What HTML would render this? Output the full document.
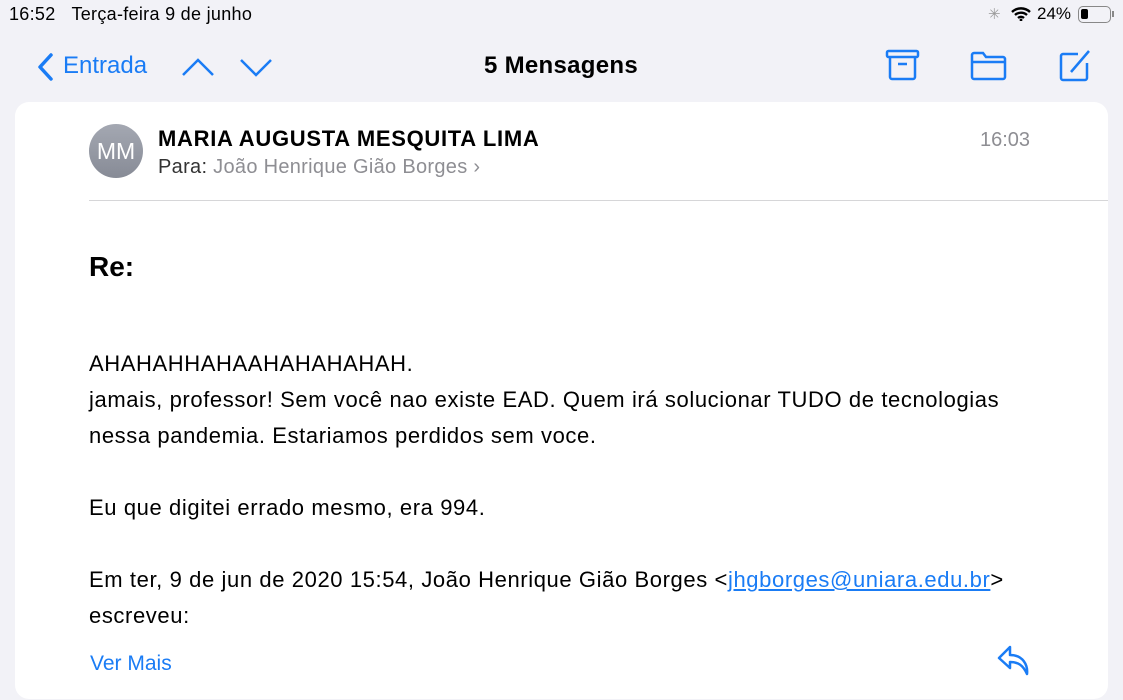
<!DOCTYPE html>
<html><head><meta charset="utf-8"><style>
*{margin:0;padding:0;box-sizing:border-box}
body{width:1123px;height:700px;background:#f2f2f7;font-family:"Liberation Sans",sans-serif;position:relative;overflow:hidden;color:#000}
.a{position:absolute;white-space:nowrap}
.blue{color:#1a7cf5}
.card{position:absolute;left:15px;top:102px;width:1093px;height:597px;background:#fff;border-radius:14px}
.body{font-size:22px;line-height:36px;letter-spacing:0.6px}
</style></head><body>
<div class="a" style="left:9px;top:4px;font-size:18px;letter-spacing:0.3px">16:52&nbsp;&nbsp;&nbsp;Terça-feira 9 de junho</div>
<div class="a" style="left:988px;top:5px;font-size:15px;color:#999">✳</div>
<svg class="a" style="left:1011px;top:7px" width="20" height="14" viewBox="0 0 20 14"><path d="M1 5a13 13 0 0 1 18 0M4 8a9 9 0 0 1 12 0M7 11a4.5 4.5 0 0 1 6 0" stroke="#000" stroke-width="2.4" fill="none"/><circle cx="10" cy="13" r="1.4"/></svg>
<div class="a" style="left:1037px;top:4px;font-size:17px">24%</div>
<div class="a" style="left:1078px;top:6px;width:33px;height:17px;border:1.5px solid #888;border-radius:5px"><div style="position:absolute;left:2px;top:2px;width:7px;height:10px;background:#000;border-radius:2px"></div></div>
<div class="a" style="left:1112px;top:11px;width:2px;height:6px;background:#888"></div>

<svg class="a" style="left:36px;top:52px" width="18" height="30" viewBox="0 0 18 30"><path d="M15 3L4 15l11 12" stroke="#1a7cf5" stroke-width="3.5" fill="none" stroke-linecap="round" stroke-linejoin="round"/></svg>
<div class="a blue" style="left:63px;top:52px;font-size:24px">Entrada</div>
<svg class="a" style="left:181px;top:56px" width="34" height="22" viewBox="0 0 34 22"><path d="M2 19L17 4l15 15" stroke="#1a7cf5" stroke-width="2.5" fill="none"/></svg>
<svg class="a" style="left:239px;top:56px" width="34" height="22" viewBox="0 0 34 22"><path d="M2 4l15 15 15-15" stroke="#1a7cf5" stroke-width="2.5" fill="none"/></svg>
<div class="a" style="left:484px;top:52px;font-size:24px;font-weight:bold;letter-spacing:0.3px">5 Mensagens</div>
<svg class="a" style="left:885px;top:48px" width="36" height="34" viewBox="0 0 36 34"><rect x="2" y="3" width="31" height="6" rx="1.5" stroke="#1a7cf5" stroke-width="2.5" fill="none"/><path d="M5 9v20a2 2 0 0 0 2 2h21a2 2 0 0 0 2-2V9M13 16h9" stroke="#1a7cf5" stroke-width="2.5" fill="none"/></svg>
<svg class="a" style="left:969px;top:50px" width="40" height="32" viewBox="0 0 40 32"><path d="M3 5a2 2 0 0 1 2-2h9l3 4h17a2 2 0 0 1 2 2v18a2 2 0 0 1-2 2H5a2 2 0 0 1-2-2zM3 12h33" stroke="#1a7cf5" stroke-width="2.5" fill="none"/></svg>
<svg class="a" style="left:1058px;top:47px" width="36" height="36" viewBox="0 0 36 36"><path d="M20 7H5a2 2 0 0 0-2 2v22a2 2 0 0 0 2 2h22a2 2 0 0 0 2-2V16" stroke="#1a7cf5" stroke-width="2.5" fill="none"/><path d="M13 25L31 4" stroke="#1a7cf5" stroke-width="2.5"/></svg>

<div class="card"></div>
<div class="a" style="left:89px;top:124px;width:54px;height:54px;border-radius:50%;background:linear-gradient(#a4a8b2,#878b96);color:#fff;font-size:23px;text-align:center;line-height:54px">MM</div>
<div class="a" style="left:158px;top:126px;font-size:22px;font-weight:bold;letter-spacing:0.7px">MARIA AUGUSTA MESQUITA LIMA</div>
<div class="a" style="left:158px;top:156px;font-size:20px;letter-spacing:0.3px"><span style="color:#333">Para:</span> <span style="color:#8e8e93">João Henrique Gião Borges ›</span></div>
<div class="a" style="left:980px;top:129px;font-size:20px;color:#8e8e93">16:03</div>
<div class="a" style="left:89px;top:200px;width:1019px;height:1px;background:#d6d6d8"></div>
<div class="a" style="left:89px;top:251px;font-size:28px;font-weight:bold">Re:</div>
<div class="a body" style="left:89px;top:346px">AHAHAHHAHAAHAHAHAHAH.<br>jamais, professor! Sem você nao existe EAD. Quem irá solucionar TUDO de tecnologias<br>nessa pandemia. Estariamos perdidos sem voce.<br><br>Eu que digitei errado mesmo, era 994.<br><br>Em ter, 9 de jun de 2020 15:54, João Henrique Gião Borges &lt;<span class="blue" style="text-decoration:underline">jhgborges@uniara.edu.br</span>&gt;<br>escreveu:</div>
<div class="a blue" style="left:90px;top:652px;font-size:21px">Ver Mais</div>
<svg class="a" style="left:996px;top:644px" width="38" height="34" viewBox="0 0 38 34"><path d="M14 3L3 14l11 10v-6c8 0 13 3 17 12 1-9-4-19-17-19z" stroke="#1a7cf5" stroke-width="2.5" fill="none" stroke-linejoin="round"/></svg>
</body></html>
